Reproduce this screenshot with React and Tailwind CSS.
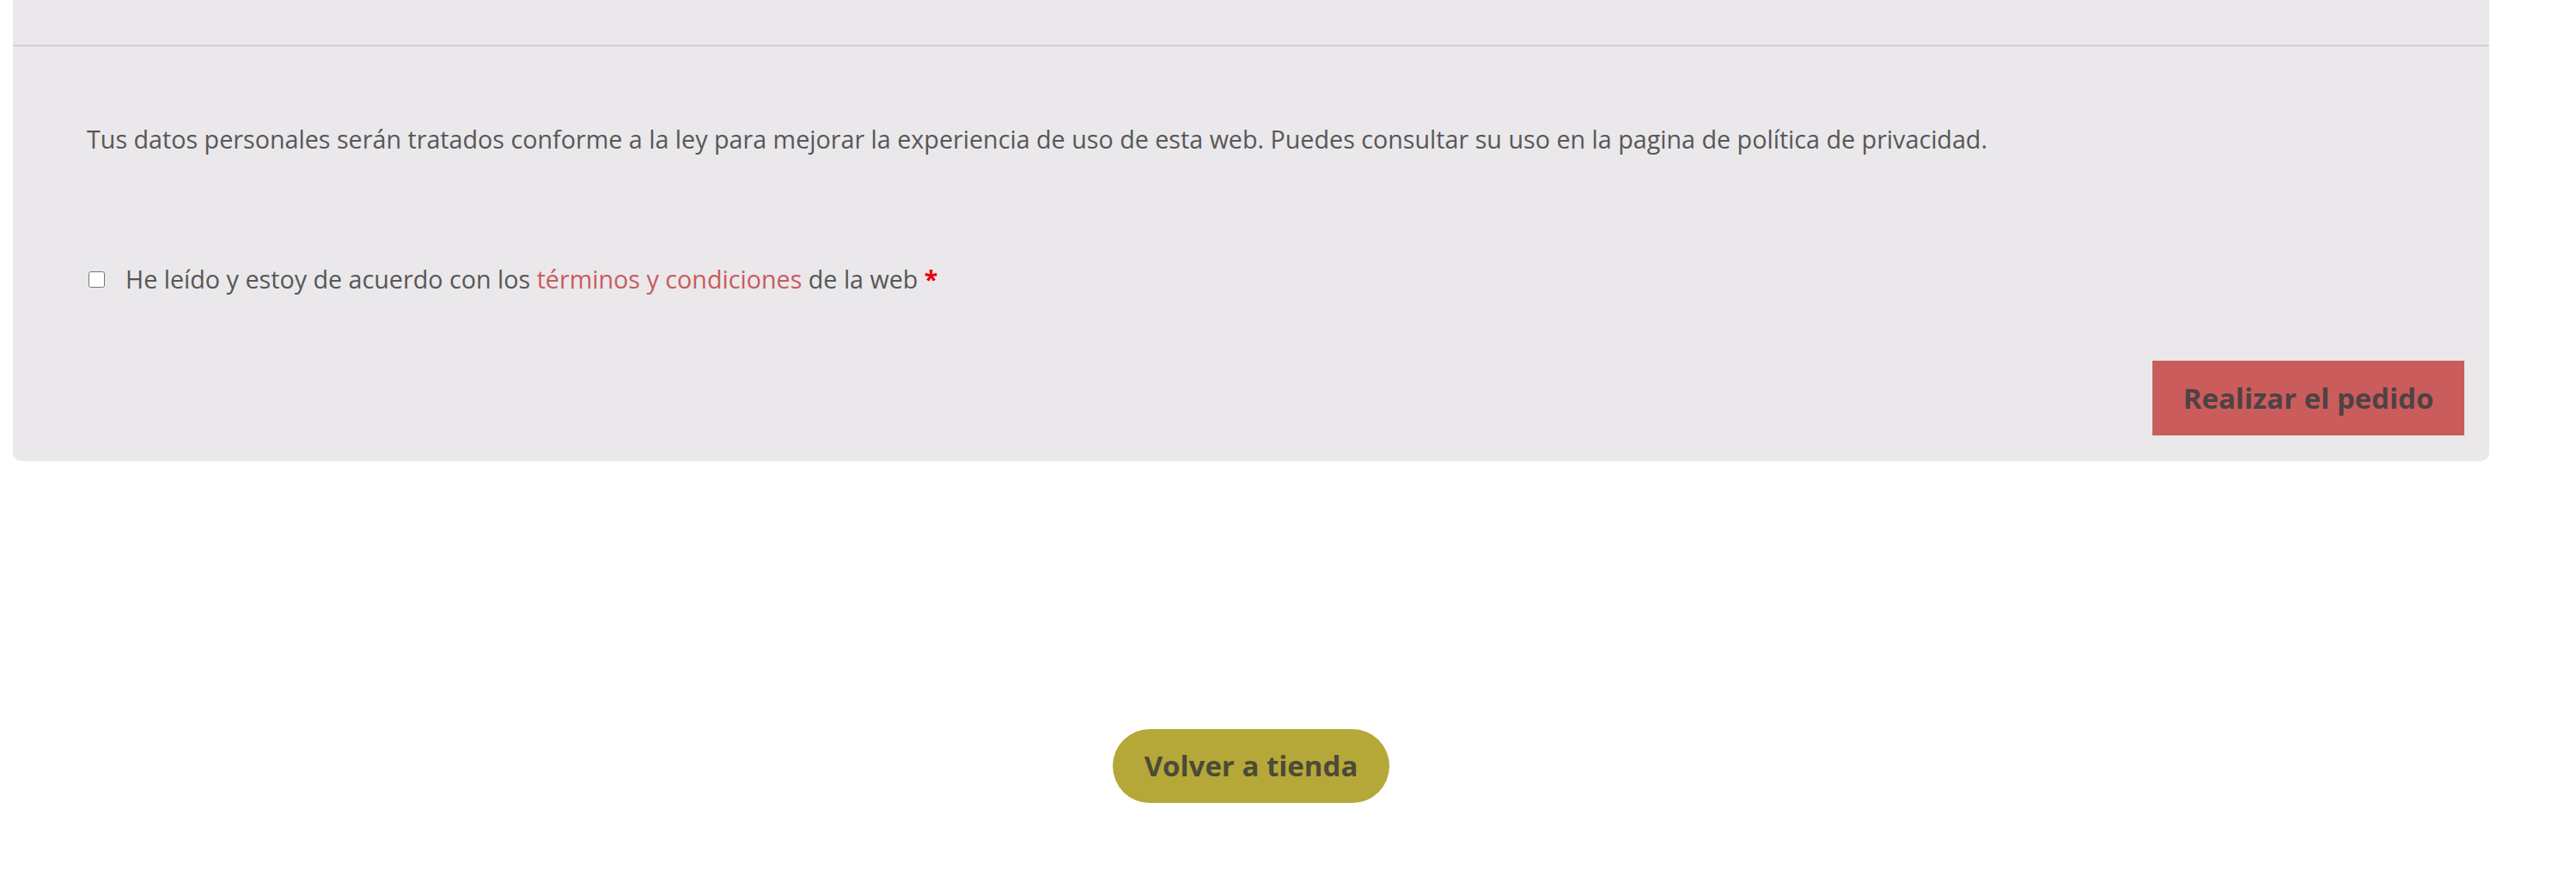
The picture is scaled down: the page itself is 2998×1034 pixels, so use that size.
import React, { useState } from "react";

const font = { fontFamily: "'Open Sans', Lato, sans-serif" };

const App = () => {
  const [agreed, setAgreed] = useState(false);

  return (
    <div className="w-full min-h-[1034px] bg-white" style={font}>
      <div className="ml-[15px] w-[2882px]">
        <div className="bg-[#eae8eb] rounded-b-[10px]">
          <div className="h-[54px] border-b-2 border-[#d3d1d5]" />

          <div className="px-[86px] pt-[87px]">
            <p className="text-[28.7px] leading-[42px] text-[#575757]">
              Tus datos personales serán tratados conforme a la ley para mejorar la
              experiencia de uso de esta web. Puedes consultar su uso en la pagina de
              política de privacidad.
            </p>

            <label className="mt-[121px] flex items-center gap-[24px] text-[28.7px] leading-[42px] text-[#575757]">
              <input
                type="checkbox"
                checked={agreed}
                onChange={(e) => setAgreed(e.target.checked)}
                className="w-[19px] h-[19px] ml-[2px]"
              />
              <span>
                He leído y estoy de acuerdo con los{" "}
                <a href="#" className="text-[#cb5b5b]">
                  términos y condiciones
                </a>{" "}
                de la web <span className="text-[#e60000] font-bold">*</span>
              </span>
            </label>
          </div>

          <div className="flex justify-end pt-[74px] pr-[29px] pb-[30px]">
            <button className="h-[87px] w-[363px] bg-[#cb5c5c] text-[#4e4245] text-[33px] font-bold">
              Realizar el pedido
            </button>
          </div>
        </div>

        <div className="flex justify-center pt-[312px]">
          <button className="h-[86px] w-[322px] rounded-full bg-[#b5a839] text-[#4c4a38] text-[33px] font-bold">
            Volver a tienda
          </button>
        </div>
      </div>
    </div>
  );
};

export default App;
